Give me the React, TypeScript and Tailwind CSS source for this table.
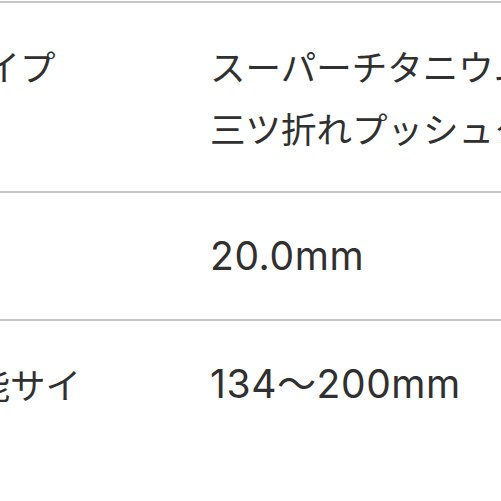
const rows = [
  { label: "中留タイプ", col: "w-[332px] -ml-[122px]", values: ["スーパーチタニウム", "三ツ折れプッシュタイプ"], latin: false },
  { label: "ラグ幅", col: "w-[342px] -ml-[132px]", values: ["20.0mm"], latin: true },
  { label: "調整可能サイズ", col: "w-[342px] -ml-[132px]", values: ["134〜200mm"], latin: true },
]

export default function App() {
  return (
    <div className="w-[501px] h-[501px] overflow-hidden bg-white text-[#303030] font-['Inter','Noto_Sans_CJK_JP',sans-serif]">
      <div className="border-t-2 border-[#c8c8c8] mt-[1px]">
        {rows.map((row, i) => (
          <div
            key={row.label}
            className={`flex items-start py-[32px] ${i < rows.length - 1 ? "border-b-2 border-[#c8c8c8]" : ""}`}
          >
            <div className={`${row.col} shrink-0 flex`}>
              <div className="w-[213px] overflow-hidden whitespace-nowrap text-[35.5px] leading-[62px] font-['Noto_Sans_CJK_JP',sans-serif]">
                {row.label}
              </div>
            </div>
            <div className="flex flex-col whitespace-nowrap">
              {row.values.map((v) => (
                <span
                  key={v}
                  className={
                    row.latin
                      ? "text-[39px] leading-[62px] tracking-[0.6px]"
                      : "text-[35.5px] leading-[62px] font-['Noto_Sans_CJK_JP',sans-serif]"
                  }
                >
                  {v}
                </span>
              ))}
            </div>
          </div>
        ))}
      </div>
    </div>
  )
}
